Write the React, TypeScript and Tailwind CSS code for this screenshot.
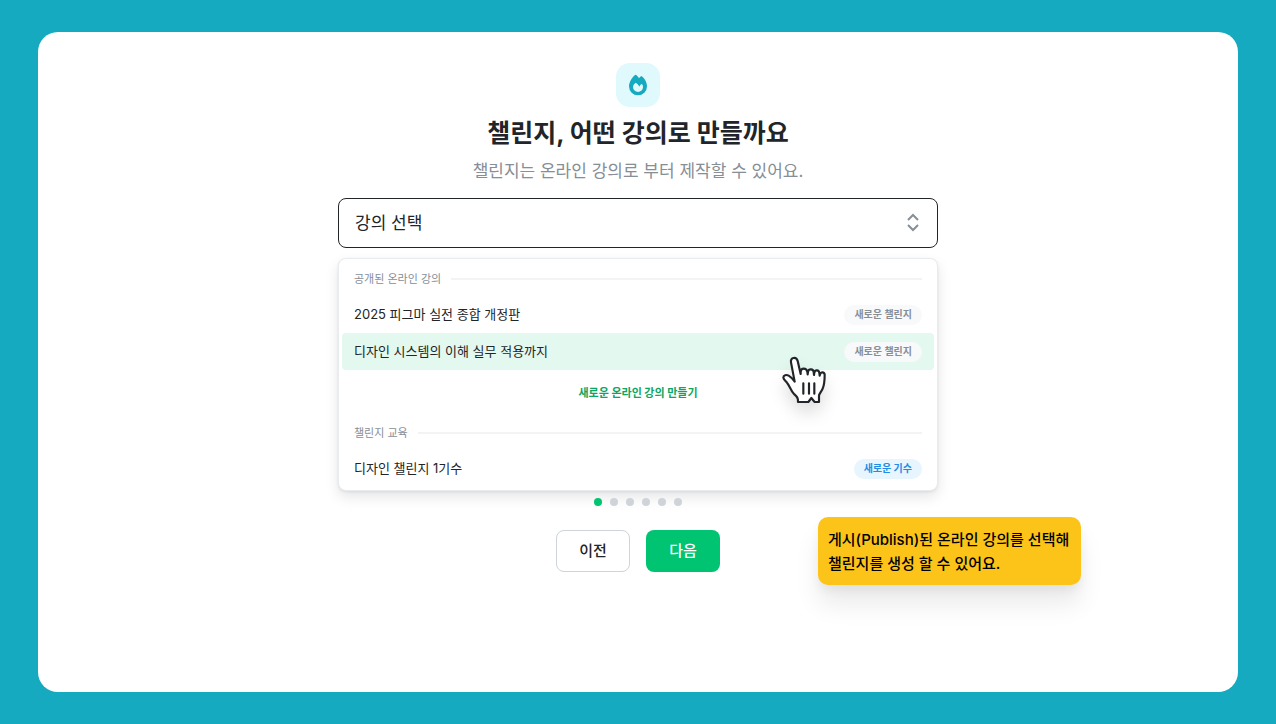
import { useState } from 'react'
import clsx from 'clsx'

type Course = {
  id: string
  title: string
  badge: string
  kind: 'challenge' | 'cohort'
}

const onlineCourses: Course[] = [
  { id: 'figma', title: '2025 피그마 실전 종합 개정판', badge: '새로운 챌린지', kind: 'challenge' },
  { id: 'design-system', title: '디자인 시스템의 이해 실무 적용까지', badge: '새로운 챌린지', kind: 'challenge' },
]

const challengeCourses: Course[] = [
  { id: 'design-1', title: '디자인 챌린지 1기수', badge: '새로운 기수', kind: 'cohort' },
]

const STEPS = 6

function FlameIcon() {
  return (
    <svg viewBox="84 60 60 66" className="h-[22px] w-5" aria-hidden="true">
      <path
        fill="#15aabf"
        fillRule="evenodd"
        d="M106 62c5 2 9 6 11 11 2-3 4-5 7-7 9 6 17 18 17 31a27 27 0 0 1-54 0c0-13 9-27 19-35ZM107 86c-5 4-8 8-8 13a15 15 0 0 0 30 0c0-4-1-7-4-9-3 1-5 4-7 8-2-5-6-9-11-12Z"
      />
    </svg>
  )
}

function SelectorIcon() {
  return (
    <svg
      viewBox="0 0 24 24"
      className="pointer-events-none absolute top-[13px] right-[13px] size-6"
      fill="none"
      stroke="#868e96"
      strokeWidth="2"
      aria-hidden="true"
    >
      <path d="M7 9 12 4l5 5M7 14l5 5 5-5" />
    </svg>
  )
}

function HandCursor() {
  return (
    <svg
      viewBox="30 165 144 150"
      className="pointer-events-none absolute top-[157px] left-[442px] h-[50px] w-12 drop-shadow-[0_10px_8px_rgba(0,0,0,0.12)]"
      fill="#fff"
      stroke="#212529"
      strokeWidth="6.500"
      strokeLinejoin="round"
      strokeLinecap="round"
      aria-hidden="true"
    >
      <path d="M63 187c-3-15 16-18 20-4l9 39v-7c1-12 17-12 20 0l1 8 1-8c2-10 16-9 17 1l1 9 1-7c2-10 14-9 15 1l1 8 1-4c3-9 14-7 14 2 0 15-1 29-6 41-3 8-10 14-11 21v19h-13l-10-12-9 12H84c1-13-4-17-12-24-9-9-13-25-21-34-4-5-10-9-11-15 0-8 9-10 16-6 7 4 12 10 18 18Z" />
      <path d="M100 250v31M117 250v31M133 250v31" fill="none" />
    </svg>
  )
}

function GroupLabel({ children }: { children: string }) {
  return (
    <div className="flex h-[34px] items-center gap-2.5 px-3">
      <h2 className="text-[11px] text-[#868e96]">{children}</h2>
      <span className="h-0.5 flex-1 bg-[#f1f3f5]" />
    </div>
  )
}

function CourseRow({ course, active, onPick }: { course: Course; active: boolean; onPick: () => void }) {
  return (
    <li>
      <button
        type="button"
        onClick={onPick}
        className={clsx(
          'flex h-[37px] w-full items-center justify-between rounded px-3 text-[13px] text-[#212529]',
          active && 'bg-[#e3f8ef]',
        )}
      >
        {course.title}
        <span
          className={clsx(
            'flex h-5 items-center rounded-full px-2.5 text-[10px] font-bold',
            course.kind === 'cohort' ? 'bg-[#e7f5ff] text-[#228be6]' : 'bg-[#f8f9fa] text-[#868e96]',
          )}
        >
          {course.badge}
        </span>
      </button>
    </li>
  )
}

export default function App() {
  const [selected, setSelected] = useState('design-system')
  const [step, setStep] = useState(0)

  return (
    <div className="flex min-h-screen bg-[#15aabf] px-[38px] py-8 font-[Inter,'Noto_Sans_CJK_KR',sans-serif]" lang="ko">
      <main className="flex flex-1 flex-col items-center rounded-[20px] bg-white px-6 pt-[31px] pb-8">
        <div className="flex size-11 items-center justify-center rounded-[14px] bg-[#e0f9fc]">
          <FlameIcon />
        </div>
        <h1 className="mt-2 text-[25px] leading-9 font-bold text-[#212529]">챌린지, 어떤 강의로 만들까요</h1>
        <p className="mt-2 text-[17px] leading-6 text-[#868e96]">챌린지는 온라인 강의로 부터 제작할 수 있어요.</p>

        <div className="relative mt-[15px] w-full max-w-[600px]">
          <div className="relative">
            <select
              aria-label="강의 선택"
              className="block h-[50px] w-full appearance-none rounded-lg border border-[#212529] bg-white px-4 pt-0.5 text-[17px] text-[#212529]"
            >
              <option>강의 선택</option>
            </select>
            <SelectorIcon />
          </div>

          <div className="relative mt-2.5 rounded-lg border border-[#e9ecef] bg-white p-[3px] shadow-[0_6px_14px_rgba(0,0,0,0.1),0_1px_3px_rgba(0,0,0,0.08)]">
            <GroupLabel>공개된 온라인 강의</GroupLabel>
            <ul>
              {onlineCourses.map((course) => (
                <CourseRow
                  key={course.id}
                  course={course}
                  active={course.id === selected}
                  onPick={() => setSelected(course.id)}
                />
              ))}
            </ul>
            <div className="flex h-[46px] items-center justify-center">
              <a href="#new" className="text-[11px] font-bold text-[#0ca561]">
                새로운 온라인 강의 만들기
              </a>
            </div>
            <GroupLabel>챌린지 교육</GroupLabel>
            <ul>
              {challengeCourses.map((course) => (
                <CourseRow
                  key={course.id}
                  course={course}
                  active={course.id === selected}
                  onPick={() => setSelected(course.id)}
                />
              ))}
            </ul>
          </div>

          <div className="relative mt-[7px] flex justify-center gap-2">
            {Array.from({ length: STEPS }, (_, i) => (
              <span key={i} className={clsx('size-2 rounded-full', i === step ? 'bg-[#00c471]' : 'bg-[#ced4da]')} />
            ))}
          </div>

          <div className="mt-6 flex justify-center gap-4 text-[15px] font-medium">
            <button
              type="button"
              onClick={() => setStep(Math.max(0, step - 1))}
              className="h-[42px] w-[74px] rounded-lg border border-[#ced4da] text-[#212529]"
            >
              이전
            </button>
            <button
              type="button"
              onClick={() => setStep(Math.min(STEPS - 1, step + 1))}
              className="h-[42px] w-[74px] rounded-lg bg-[#00c471] text-white"
            >
              다음
            </button>
          </div>

          <HandCursor />

          <div
            role="tooltip"
            className="absolute top-[319px] left-[480px] w-[263px] rounded-[10px] bg-[#fcc419] px-2.5 pt-[11px] pb-[9px] text-[15px] leading-6 font-medium whitespace-nowrap text-black shadow-[0_20px_25px_rgba(0,0,0,0.08),0_6px_10px_rgba(0,0,0,0.05)]"
          >
            게시(Publish)된 온라인 강의를 선택해
            <br />
            챌린지를 생성 할 수 있어요.
          </div>
        </div>
      </main>
    </div>
  )
}
